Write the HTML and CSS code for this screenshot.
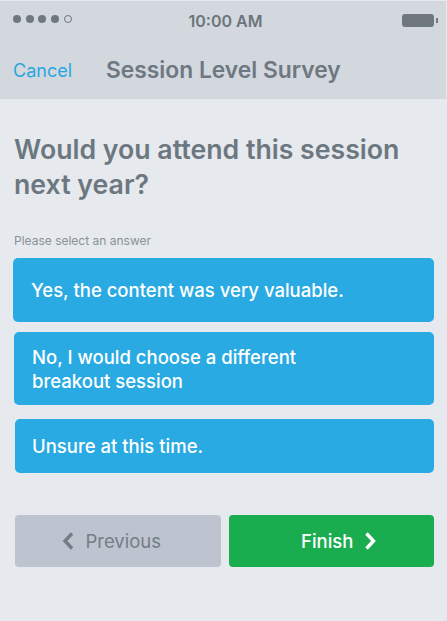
FILE: index.html
```html
<!DOCTYPE html>
<html>
<head>
<meta charset="utf-8">
<link rel="stylesheet" href="styles.css">
</head>
<body>
<div class="screen">
  <header class="header">
    <div class="status">
      <div class="signal">
        <span class="dot"></span><span class="dot"></span><span class="dot"></span><span class="dot"></span><span class="dot empty"></span>
      </div>
      <div class="time">10:00 AM</div>
      <div class="battery"><span class="cell"></span><span class="nub"></span></div>
    </div>
    <nav class="nav">
      <span class="cancel">Cancel</span>
      <span class="title">Session Level Survey</span>
    </nav>
  </header>
  <main class="content">
    <h1 class="question">Would you attend this session next year?</h1>
    <p class="hint">Please select an answer</p>
    <div class="options">
      <div class="option opt1">Yes, the content was very valuable.</div>
      <div class="option opt2">No, I would choose a different<br>breakout session</div>
      <div class="option opt3">Unsure at this time.</div>
    </div>
    <div class="actions">
      <div class="btn prev">
        <svg class="chev" width="12" height="18" viewBox="0 0 12 18"><path d="M10 1.5 L3 9 L10 16.5" fill="none" stroke="currentColor" stroke-width="3.4"/></svg>
        <span>Previous</span>
      </div>
      <div class="btn finish">
        <span>Finish</span>
        <svg class="chev" width="13" height="18" viewBox="0 0 13 18"><path d="M2.5 1.5 L9.5 9 L2.5 16.5" fill="none" stroke="currentColor" stroke-width="3.4"/></svg>
      </div>
    </div>
  </main>
</div>
</body>
</html>
```
FILE: styles.css
```css
* { box-sizing: border-box; }
html, body { margin: 0; padding: 0; }
body {
  background: #e6e9ee;
  font-family: "Inter", "Open Sans", sans-serif;
  width: 447px;
  height: 621px;
  overflow: hidden;
}
.screen { padding-top: 1px; }
.header {
  background: #d3d7de;
  height: 98px;
  margin-right: 1px;
}
.status {
  display: flex;
  align-items: center;
  justify-content: space-between;
  height: 38px;
  padding: 0 8px 0 13px;
}
.signal { display: flex; gap: 4.7px; width: 90px; margin-top: -2px; }
.dot {
  width: 8px; height: 8px; border-radius: 50%;
  background: #6f787f;
}
.dot.empty { background: transparent; border: 1px solid #6f787f; }
.time {
  font-size: 16px;
  font-weight: 600;
  color: #6b757c;
  margin-top: 2px;
}
.battery { display: flex; align-items: center; width: 90px; justify-content: flex-end; margin-top: 1px; }
.cell {
  width: 32px; height: 13px; border-radius: 3px;
  background: #6f787f;
}
.nub { width: 2px; height: 5px; background: #6f787f; margin-left: 2px; }
.nav {
  display: flex;
  align-items: center;
  height: 60px;
  padding: 0 13px;
}
.cancel {
  font-size: 18px;
  color: #29a8e0;
  margin-top: 3px;
  width: 93px;
}
.title {
  font-size: 22.8px;
  font-weight: 600;
  color: #6e7880;
}
.content { padding: 0 13px; }
.question {
  margin: 33px 0 0 1px;
  font-size: 26.7px;
  line-height: 35px;
  font-weight: 600;
  color: #6d777f;
}
.hint {
  margin: 31px 0 0 1px;
  font-size: 12px;
  line-height: 15px;
  color: #8a9298;
}
.options {
  margin-top: 10px;
  display: flex;
  flex-direction: column;
  gap: 10px;
}
.option {
  background: #29aae2;
  color: #fff;
  border-radius: 5px;
  font-size: 18.5px;
  font-weight: 500;
  line-height: 24px;
  padding: 0 18px;
  display: flex;
  align-items: center;
}
.opt1 { height: 64px; }
.opt2 { height: 73px; margin-left: 1px; }
.opt3 { height: 54px; margin: 4px 0 0 2px; padding-left: 17px; }
.actions {
  margin: 42px 0 0 2px;
  display: flex;
  gap: 8px;
}
.btn {
  width: 205.5px;
  height: 52px;
  border-radius: 4px;
  display: flex;
  align-items: center;
  justify-content: center;
  gap: 11px;
  font-size: 18.5px;
}
.prev { background: #bdc4cf; color: #737d85; padding-right: 12px; }
.finish { background: #1aad50; color: #fff; font-weight: 500; padding-left: 16px; }
```
